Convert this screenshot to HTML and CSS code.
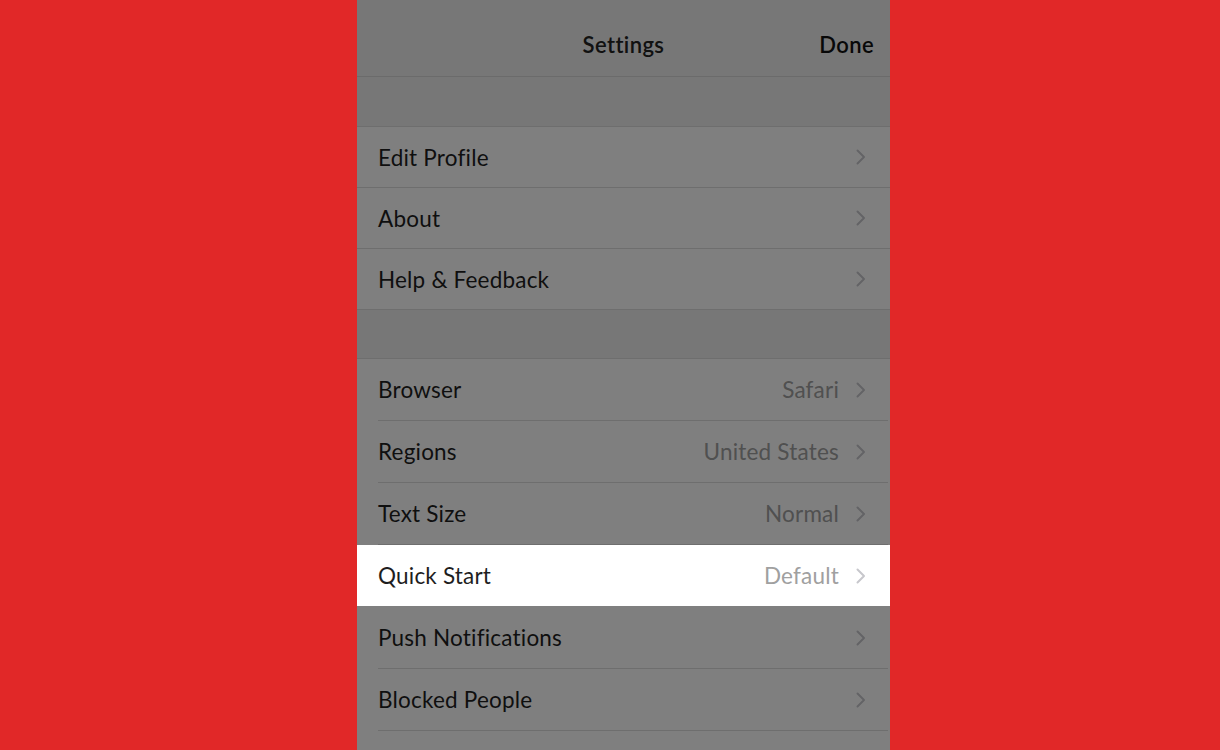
FILE: index.html
```html
<!DOCTYPE html>
<html lang="en">
<head>
  <meta charset="UTF-8">
  <title>Settings</title>
  <link rel="stylesheet" href="styles.css">
</head>
<body>

  <div class="screen">
    <!-- Header -->
    <div class="header">
      <span class="title">Settings</span>
      <span class="done">Done</span>
    </div>

    <div class="spacer"></div>

    <!-- Account group -->
    <div class="group">
      <div class="row"><span class="label">Edit Profile</span><span class="chev"><svg width="12" height="16" viewBox="0 0 12 16"><polyline points="2.5,1.5 9,8 2.5,14.5" /></svg></span></div>
      <div class="row"><span class="label">About</span><span class="chev"><svg width="12" height="16" viewBox="0 0 12 16"><polyline points="2.5,1.5 9,8 2.5,14.5" /></svg></span></div>
      <div class="row"><span class="label">Help &amp; Feedback</span><span class="chev"><svg width="12" height="16" viewBox="0 0 12 16"><polyline points="2.5,1.5 9,8 2.5,14.5" /></svg></span></div>
    </div>

    <div class="spacer small"></div>

    <!-- Preferences group -->
    <div class="group tall">
      <div class="row"><span class="label">Browser</span><span class="value">Safari</span><span class="chev"><svg width="12" height="16" viewBox="0 0 12 16"><polyline points="2.5,1.5 9,8 2.5,14.5" /></svg></span></div>
      <div class="row"><span class="label">Regions</span><span class="value">United States</span><span class="chev"><svg width="12" height="16" viewBox="0 0 12 16"><polyline points="2.5,1.5 9,8 2.5,14.5" /></svg></span></div>
      <div class="row"><span class="label">Text Size</span><span class="value">Normal</span><span class="chev"><svg width="12" height="16" viewBox="0 0 12 16"><polyline points="2.5,1.5 9,8 2.5,14.5" /></svg></span></div>
      <div class="row spotlight"><span class="label">Quick Start</span><span class="value">Default</span><span class="chev"><svg width="12" height="16" viewBox="0 0 12 16"><polyline points="2.5,1.5 9,8 2.5,14.5" /></svg></span></div>
      <div class="row"><span class="label">Push Notifications</span><span class="chev"><svg width="12" height="16" viewBox="0 0 12 16"><polyline points="2.5,1.5 9,8 2.5,14.5" /></svg></span></div>
      <div class="row"><span class="label">Blocked People</span><span class="chev"><svg width="12" height="16" viewBox="0 0 12 16"><polyline points="2.5,1.5 9,8 2.5,14.5" /></svg></span></div>
      <div class="row"></div>
    </div>

    <!-- dim overlay, the highlighted row sits above it -->
    <div class="dim"></div>
  </div>

</body>
</html>
```

FILE: styles.css
```css
body {
  margin: 0;
  background-color: #e12828;
  font-family: Lato, "Noto Sans", sans-serif;
  height: 750px;
  overflow: hidden;
}
.screen {
  position: relative;
  margin-left: 357px;
  width: 533px;
  height: 750px;
  background: #efeff4;
  overflow: hidden;
}
.header {
  height: 63px;
  padding-top: 13px;
  border-bottom: 1px solid #d6d6d6;
  background: #eeeeee;
  display: flex;
  align-items: center;
  justify-content: center;
  position: relative;
}
.title {
  font-size: 22px;
  font-weight: 600;
  letter-spacing: 0.4px;
  color: #222;
}
.done {
  position: absolute;
  right: 16px;
  top: 31px;
  font-size: 22px;
  font-weight: 600;
  letter-spacing: 0.4px;
  color: #111;
}
.spacer {
  height: 49px;
  background: #eeeeee;
}
.spacer.small {
  height: 48px;
}
.group {
  border-top: 1px solid #dcdcdc;
  background: white;
}
.row {
  height: 60px;
  display: flex;
  align-items: center;
  padding: 0 23px 0 21px;
  background: white;
  position: relative;
  border-bottom: 1px solid #dcdcdc;
}
.group.tall .row {
  height: 61px;
  border-bottom: none;
  margin-bottom: 1px;
}
.group.tall .row::after {
  content: "";
  position: absolute;
  left: 21px;
  right: 2px;
  bottom: -1px;
  height: 1px;
  background: #dcdcdc;
}
.label {
  flex: 1;
  font-size: 22.5px;
  letter-spacing: 0.2px;
  color: #1e1e1e;
}
.value {
  font-size: 22.5px;
  letter-spacing: 0.2px;
  color: #a0a0a0;
  margin-right: 16px;
}
.chev {
  display: flex;
  align-items: center;
}
.chev polyline {
  fill: none;
  stroke: #c7c7cc;
  stroke-width: 2;
  stroke-linecap: round;
  stroke-linejoin: round;
}
.dim {
  position: absolute;
  left: 0;
  top: 0;
  right: 0;
  bottom: 0;
  background: rgba(0, 0, 0, 0.5);
  z-index: 1;
}
.row.spotlight {
  z-index: 2;
}
.row.spotlight::after {
  display: none;
}
```
